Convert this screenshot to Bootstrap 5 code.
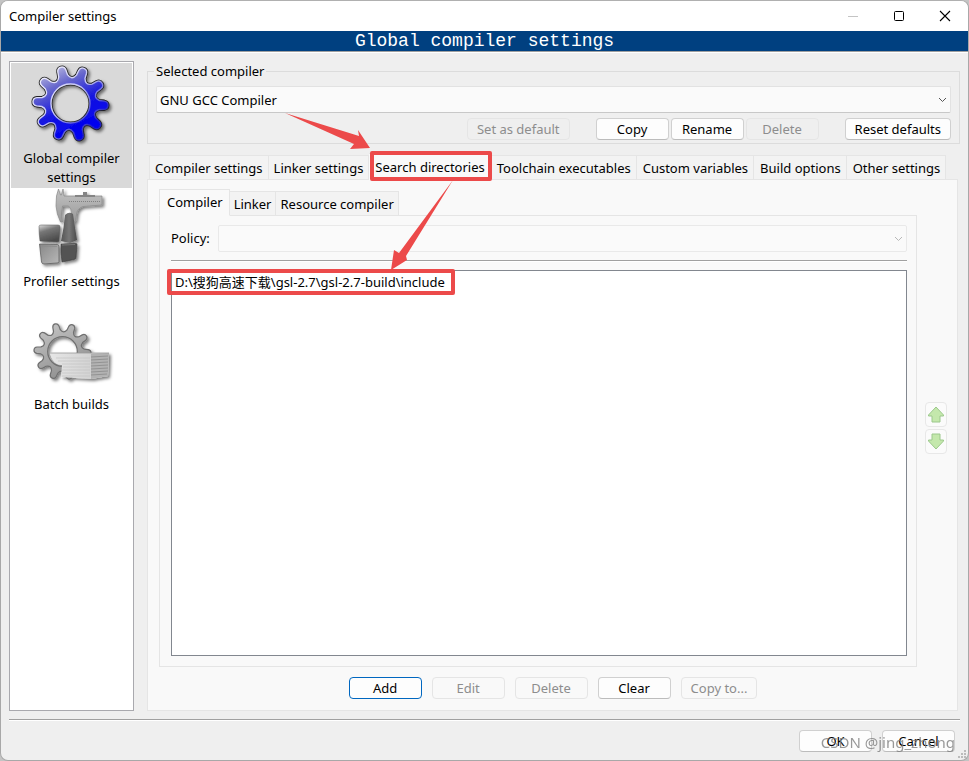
<!DOCTYPE html>
<html lang="en">
<head>
<meta charset="utf-8">
<meta name="viewport" content="width=device-width, initial-scale=1">
<title>Compiler settings</title>
<link href="https://cdn.jsdelivr.net/npm/bootstrap@5.3.0/dist/css/bootstrap.min.css" rel="stylesheet">
<style>
body { font-family: "Noto Sans", "Noto Sans CJK SC", sans-serif; font-size: 13px; line-height: 19px; color: #000; background: #c4c4c4; }
.app-window { min-height: 100vh; background: #efefef; border: 1px solid #a8a8a8; border-top-color: #b0b0b0; border-radius: 8px; overflow: hidden; }
.title-bar { height: 30px; background: #fff; }
.title-bar button { width: 46px; height: 28px; border: 0; background: none; padding: 0 0 3px; }
.banner { height: 21px; background: #004080; color: #fff; border-bottom: 1px solid #a0a0a0; font: 18px/20px "Liberation Mono", monospace; box-shadow: 0 1px #fff; }
.body-area { padding: 9px 8px 8px; }
.side-list { width: 125px; background: #fff; border: 1px solid #a9a9ae; padding: 1px; margin-right: 13px; }
.side-list a { display: block; height: 123px; color: #000; text-decoration: none; text-align: center; }
.side-list a.active { height: 125px; padding-top: 2px; background: #d9d9d9; }
.side-list svg { display: block; width: 100px; height: 84px; margin: 0 auto; overflow: visible; }
.compiler-group { border: 1px solid #dcdcdc; margin: 0 0 9px; padding: 0 8px 3px; }
.compiler-group legend { float: none; width: auto; font-size: 13px; line-height: 20px; margin: 0 0 5px -2px; padding: 0 2px; background: #efefef; }
.pick { height: 27px; width: 100%; border: 1px solid #e2e2e2; border-bottom-color: #c8c8c8; background: #fafafa; padding: 1px 3px 0; color: #000; font-size: 13px; appearance: none; border-radius: 2px; opacity: 1; }
.pick:disabled { border-color: #e9e9e9; }
.pick-wrap svg { position: absolute; right: 4px; top: 9px; }
.group-actions { gap: 26px; margin-top: 5px; }
.action-set { gap: 2px; }
.dlg-btn { min-width: 73px; height: 22px; border: 1px solid #d0d0d0; border-bottom-color: #bcbcbc; border-radius: 4px; background: #fdfdfd; font-size: 13px; line-height: 18px; padding: 0 9px; color: #000; }
.dlg-btn:disabled { color: #8d8d8d; border-color: #e5e5e5; background: transparent; }
.dlg-btn.primary { border-color: #0067c0; }
.tab-strip { margin-left: 2px; align-items: flex-end; margin-bottom: -1px; }
.tab-strip button { height: 25px; border: 1px solid #e5e5e5; border-left-width: 0; background: #f3f3f3; padding: 1px 5px 0; line-height: 20px; color: #000; white-space: nowrap; }
.tab-strip button:first-child { border-left-width: 1px; }
.tab-strip button.active { position: relative; height: 27px; background: #f9f9f9; border-bottom-color: #f9f9f9; padding: 0 5px 0 6px; }
.main-tabs .active ~ button { padding-left: 6px; }
.pane { background: #f9f9f9; border: 1px solid #e5e5e5; }
.outer-pane { padding: 9px 10px 11px 11px; margin-right: 2px; }
.inner-pane { padding: 9px 9px 10px 11px; }
.tab-strip.sub-tabs { margin-left: 0; }
.tab-strip.sub-tabs .active { padding: 0 6px 1px 7px; }
.sub-tabs button { padding-left: 4px; padding-right: 4px; }
.groove { height: 2px; background: #a0a0a0; border-bottom: 1px solid #fff; }
.dir-list { background: #fff; border: 1px solid #82878f; padding: 2px 3px; }
.arrow-col { width: 22px; margin-left: 8px; gap: 2px; }
.arrow-btn { width: 22px; height: 25px; padding: 0; border: 1px solid #e8e8e8; border-radius: 4px; background: #fbfbfb; }
.arrow-btn svg { display: block; margin: auto; }
.list-actions { gap: 10px; margin-top: 10px; }
.hilite { position: absolute; border: 4px solid #ec4a4a; border-radius: 2px; pointer-events: none; }
.hl-tab { left: 1px; right: -2px; top: -3px; bottom: -2px; }
.hl-path { left: -8px; right: -10px; top: -4px; bottom: -3px; }
.pointer-a { position: absolute; left: -84px; top: -44px; pointer-events: none; z-index: 4; }
.pointer-b { position: absolute; left: 20px; top: 24px; pointer-events: none; z-index: 4; }
.footer-row { padding: 9px 13px 8px; gap: 10px; position: relative; }
.stamp { position: absolute; right: 13px; top: 10px; font-size: 15px; line-height: 22px; color: #7f7f7f; opacity: .8; pointer-events: none; }
.grip { position: absolute; right: 2px; bottom: 2px; }
</style>
</head>
<body>
<div class="app-window d-flex flex-column">
  <header class="title-bar d-flex align-items-center ps-2">
    <span class="me-auto">Compiler settings</span>
    <button type="button" aria-label="Minimize" disabled><svg width="12" height="12"><path d="M1 6.5h10" stroke="#c4c4c4"/></svg></button>
    <button type="button" aria-label="Maximize"><svg width="12" height="12"><rect x="1.5" y="1.5" width="9" height="9" rx="1" fill="none" stroke="#000"/></svg></button>
    <button type="button" aria-label="Close"><svg width="12" height="12"><path d="M1 1l10 10M11 1L1 11" stroke="#000" stroke-width="1.1"/></svg></button>
  </header>
  <div class="banner text-center">Global compiler settings</div>

  <main class="body-area d-flex flex-grow-1">
    <nav class="side-list flex-shrink-0" aria-label="Categories">
      <a href="#" class="active">
        <svg viewBox="0 0 100 84" aria-hidden="true">
          <defs>
            <linearGradient id="blueFill" x1="0.15" y1="0" x2="0.6" y2="0.9"><stop offset="0" stop-color="#c8c8e4"/><stop offset=".3" stop-color="#6868cc"/><stop offset=".65" stop-color="#1414e0"/><stop offset="1" stop-color="#0000f0"/></linearGradient>
            <linearGradient id="rim" x1="0" y1="0" x2="1" y2="1"><stop offset="0" stop-color="#fff"/><stop offset=".45" stop-color="#c4c4f4"/><stop offset=".8" stop-color="#2020c0"/></linearGradient>
            <linearGradient id="grayFill" x1="0" y1="0" x2=".5" y2="1"><stop offset="0" stop-color="#c8c8c8"/><stop offset="1" stop-color="#909090"/></linearGradient>
            <linearGradient id="steel" x1="0" y1="0" x2="0" y2="1"><stop offset="0" stop-color="#c2c2c2"/><stop offset="1" stop-color="#9a9a9a"/></linearGradient>
            <linearGradient id="cone" x1="0" y1="0" x2="1" y2="0"><stop offset="0" stop-color="#555"/><stop offset=".5" stop-color="#777"/><stop offset="1" stop-color="#4a4a4a"/></linearGradient>
            <linearGradient id="cubeTop" x1="0" y1="0" x2=".4" y2="1"><stop offset="0" stop-color="#ddd"/><stop offset=".4" stop-color="#777"/><stop offset="1" stop-color="#4c4c4c"/></linearGradient>
            <linearGradient id="cubeLight" x1="0" y1="0" x2="1" y2="1"><stop offset="0" stop-color="#888"/><stop offset="1" stop-color="#b8b8b8"/></linearGradient>
            <linearGradient id="paper" x1="0" y1="0" x2="1" y2="0"><stop offset="0" stop-color="#e6e6e6"/><stop offset="1" stop-color="#cacaca"/></linearGradient>
            <filter id="soft" x="-20%" y="-20%" width="150%" height="150%"><feDropShadow dx="2" dy="2" stdDeviation="1.5" flood-opacity=".5"/></filter>
          </defs>
          <g transform="translate(48.5 38.5)" filter="url(#soft)">
            <path class="gear-shape" fill="url(#blueFill)" stroke="#222" stroke-width="3" fill-rule="evenodd"/>
            <path class="gear-shape" fill="url(#blueFill)" stroke="url(#rim)" stroke-width="1.4" fill-rule="evenodd"/>
          </g>
        </svg>
        Global compiler<br>settings
      </a>
      <a href="#">
        <svg viewBox="0 0 100 84" aria-hidden="true">
          <g filter="url(#soft)">
            <path d="M36.500 1l2 6h1l1.500-6 1 7h38v9l-19 1.500q-6 2-6.500 8l-1 7-3 .5-1-8q0-6-3-8h-6l-1 8 1 8h-2q-4-8-4.500-16l.5-10z" fill="url(#steel)" stroke="#888" stroke-width=".7"/>
            <path d="M61 4h4v3h-4zM53 7h20v2H53z" fill="#858585"/>
            <path d="M47 13.500h31" stroke="#808080" stroke-dasharray="1 1"/>
            <path d="M43 27q4-4 8-1 2 14 4 26l-7 3-9-2q3-14 4-26z" fill="url(#cone)"/>
            <path d="M17 38.500q0-1.500 2-1.500h17q2 0 2 2l-1 14q0 1-2 1l-17-1q-1-7-1-14.500z" fill="url(#cubeTop)" stroke="#555" stroke-width=".5"/>
            <path d="M17.500 56l18 .5q1.500 0 1.500 2v15q0 1.500-2 1.500l-13 1q-2 0-2.500-2z" fill="url(#cubeLight)" stroke="#555" stroke-width=".7"/>
            <path d="M39 56l15-.5q1 0 1 1l-1 13q0 1.500-2 2l-12 2.500q-1.500-9-1-18z" fill="#525252" stroke="#3c3c3c" stroke-width=".6"/>
            <path d="M40 57l13-.5M20 58l15 .5" stroke="#888" stroke-width=".7"/>
          </g>
        </svg>
        Profiler settings
      </a>
      <a href="#">
        <svg viewBox="0 0 100 84" aria-hidden="true">
          <g filter="url(#soft)">
            <g transform="translate(40.5 40.5) scale(.76)"><path class="gear-shape" fill="url(#grayFill)" stroke="#707070" stroke-width="1.6" fill-rule="evenodd"/></g>
            <path d="M28 42h59l-1 23-17 3-30-2 1-12q-8 1-12-12z" fill="url(#paper)"/>
            <path d="M34 47h34M36 50h32M40 53h28M41 56h27M40 59h28M40 62h28M40 65h28" stroke="#c0c0c0" stroke-width=".6"/>
            <path d="M69 43l18-1-1 23-17 3z" fill="#b2b2b2"/>
            <path d="M69 46l17-1M69 49l17-1M69 52l17-1M69 55l17-1M69 58l17-1M69 61l17-1M69 64l16-1" stroke="#8a8a8a" stroke-width=".8"/>
            <path d="M28 42h59" stroke="#9a9a9a" stroke-width=".8"/>
          </g>
        </svg>
        Batch builds
      </a>
    </nav>

    <div class="d-flex flex-column flex-grow-1">
      <fieldset class="compiler-group">
        <legend>Selected compiler</legend>
        <div class="pick-wrap position-relative">
          <select class="pick d-block" aria-label="Selected compiler"><option>GNU GCC Compiler</option></select>
          <svg width="9" height="9"><path d="M1 3l3.500 3.500L8 3" fill="none" stroke="#555"/></svg>
        </div>
        <div class="group-actions d-flex justify-content-end">
          <button type="button" class="dlg-btn" disabled>Set as default</button>
          <div class="action-set d-flex">
            <button type="button" class="dlg-btn">Copy</button>
            <button type="button" class="dlg-btn">Rename</button>
            <button type="button" class="dlg-btn" disabled>Delete</button>
          </div>
          <button type="button" class="dlg-btn">Reset defaults</button>
        </div>
      </fieldset>

      <div class="tab-strip main-tabs d-flex" role="tablist">
        <button type="button" role="tab">Compiler settings</button>
        <button type="button" role="tab">Linker settings</button>
        <button type="button" role="tab" class="active" aria-selected="true">Search directories
          <span class="hilite hl-tab"></span>
          <svg class="pointer-a" width="86" height="44" aria-hidden="true"><path d="M0 3L74 26l-1-6 12 18-20 1 4-5z" fill="#ec4a4a"/></svg>
          <svg class="pointer-b" width="66" height="94" aria-hidden="true"><path d="M64 2L17 78l1 4L2 92 5 72l5 3z" fill="#ec4a4a"/></svg>
        </button>
        <button type="button" role="tab">Toolchain executables</button>
        <button type="button" role="tab">Custom variables</button>
        <button type="button" role="tab">Build options</button>
        <button type="button" role="tab">Other settings</button>
      </div>

      <section class="pane outer-pane d-flex flex-column flex-grow-1">
        <div class="d-flex flex-grow-1">
          <div class="d-flex flex-column flex-grow-1">
            <div class="tab-strip sub-tabs d-flex" role="tablist">
              <button type="button" role="tab" class="active" aria-selected="true">Compiler</button>
              <button type="button" role="tab">Linker</button>
              <button type="button" role="tab">Resource compiler</button>
            </div>
            <div class="pane inner-pane d-flex flex-column flex-grow-1">
              <div class="d-flex align-items-center mb-2">
                <label for="policy" class="me-2">Policy:</label>
                <div class="pick-wrap position-relative flex-grow-1">
                  <select id="policy" class="pick d-block" disabled></select>
                  <svg width="9" height="9"><path d="M1 3l3.500 3.500L8 3" fill="none" stroke="#b8b8b8"/></svg>
                </div>
              </div>
              <div class="groove mb-2"></div>
              <div class="dir-list flex-grow-1">
                <span class="position-relative d-inline-block">D:\搜狗高速下载\gsl-2.7\gsl-2.7-build\include<span class="hilite hl-path"></span></span>
              </div>
            </div>
          </div>
          <div class="arrow-col d-flex flex-column justify-content-center">
            <button type="button" class="arrow-btn" aria-label="Move up" disabled><svg width="16" height="17"><path d="M8 1l7.500 8v1H12v6H4v-6H.5V9z" fill="#c4e8ac" stroke="#9cc88c"/></svg></button>
            <button type="button" class="arrow-btn" aria-label="Move down" disabled><svg width="16" height="17"><path d="M8 16l7.500-8V7H12V1H4v6H.5v1z" fill="#c4e8ac" stroke="#9cc88c"/></svg></button>
          </div>
        </div>
        <div class="list-actions d-flex justify-content-center">
          <button type="button" class="dlg-btn primary">Add</button>
          <button type="button" class="dlg-btn" disabled>Edit</button>
          <button type="button" class="dlg-btn" disabled>Delete</button>
          <button type="button" class="dlg-btn">Clear</button>
          <button type="button" class="dlg-btn" disabled>Copy to...</button>
        </div>
      </section>
    </div>
  </main>

  <div class="groove mx-2"></div>
  <footer class="footer-row d-flex justify-content-end">
    <button type="button" class="dlg-btn">OK</button>
    <button type="button" class="dlg-btn">Cancel</button>
    <span class="stamp">CSDN @jing_zhong</span>
    <svg class="grip" width="8" height="8" aria-hidden="true"><path d="M6 0h2v2H6zM3 3h2v2H3zM6 3h2v2H6zM0 6h2v2H0zM3 6h2v2H3zM6 6h2v2H6z" fill="#bbb"/></svg>
  </footer>
</div>
<script src="https://cdn.jsdelivr.net/npm/bootstrap@5.3.0/dist/js/bootstrap.bundle.min.js"></script>
<script>
// Ten-tooth gear outline with a round hole, centred on the origin.
const at = (deg, r) => (r * Math.cos(deg * Math.PI / 180)).toFixed(1) + ' ' + (r * Math.sin(deg * Math.PI / 180)).toFixed(1);
let d = '';
for (let i = 0; i < 10; i++) {
  const t = 3 + 36 * i;
  d += (i ? 'L' : 'M') + at(t - 9, 29) + 'L' + at(t - 7, 34) + 'C' + at(t - 5, 39) + ' ' + at(t + 5, 39) + ' ' + at(t + 7, 34)
     + 'L' + at(t + 9, 29) + 'Q' + at(t + 18, 23) + ' ' + at(t + 27, 29);
}
d += 'ZM19.5 0A19.5 19.5 0 1 0-19.5 0A19.5 19.5 0 1 0 19.5 0Z';
document.querySelectorAll('.gear-shape').forEach(p => p.setAttribute('d', d));
</script>
</body>
</html>
